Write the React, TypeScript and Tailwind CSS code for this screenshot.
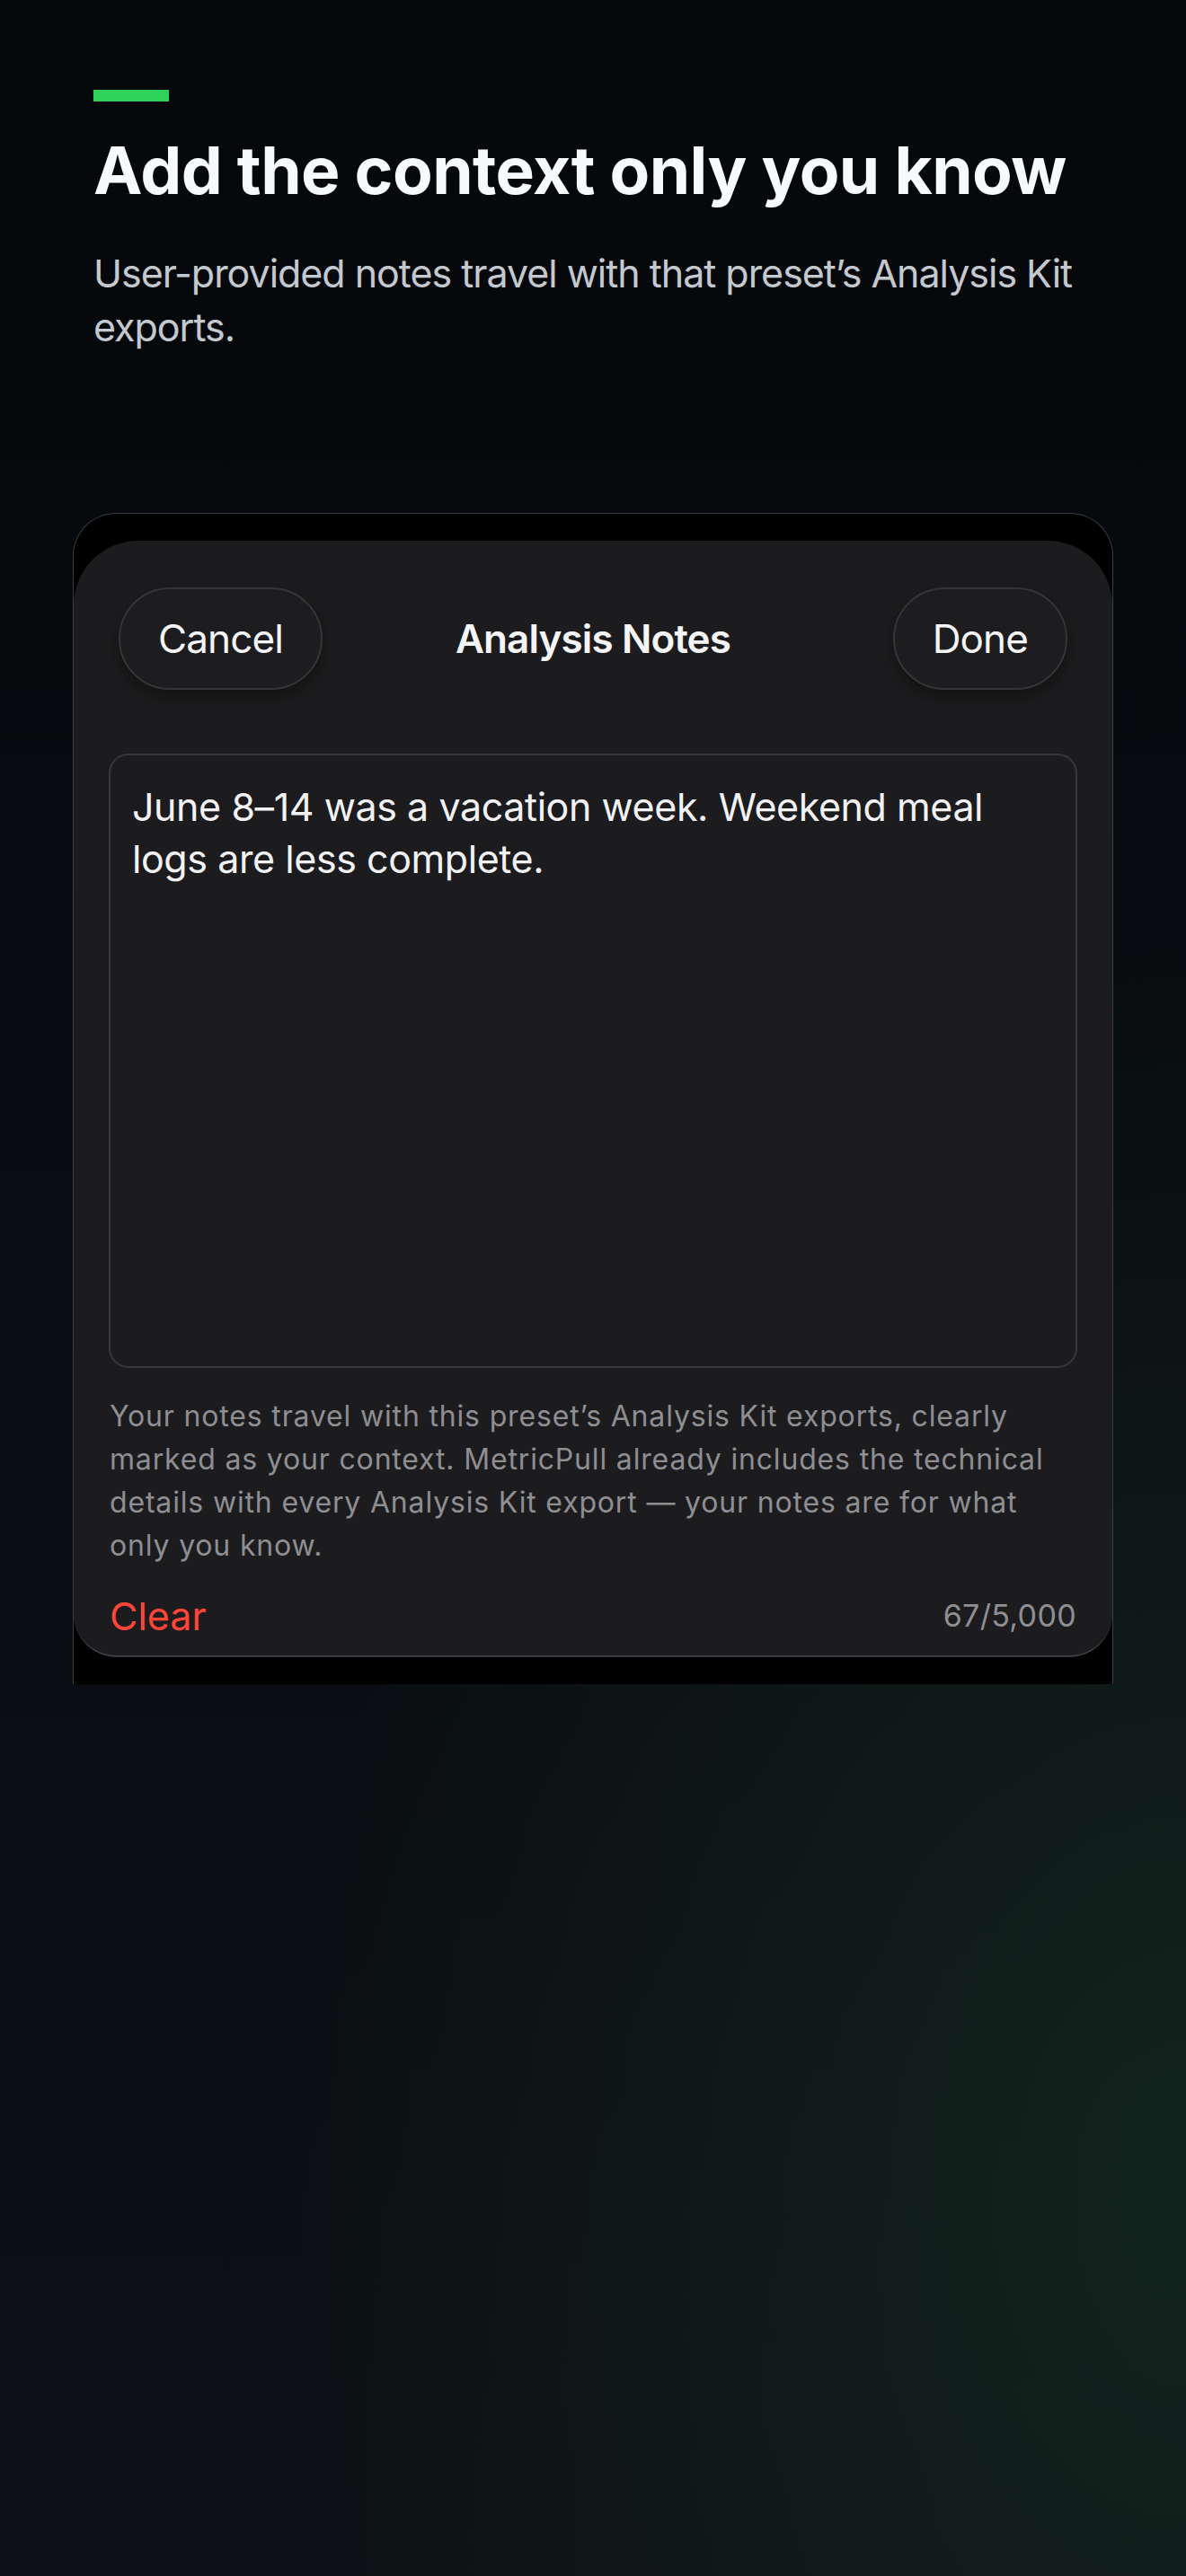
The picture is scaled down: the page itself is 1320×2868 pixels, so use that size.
import React from 'react'

const font = { fontFamily: 'Inter, "Noto Sans", sans-serif' }

function Pill({ label }: { label: string }) {
  return (
    <button className="flex h-[114px] items-center justify-center rounded-full border-2 border-[#353537] bg-[#1d1d1f] px-[42px] text-[44px] leading-none tracking-[-0.02em] text-[#f5f5f7] shadow-[0_8px_18px_rgba(0,0,0,0.35)]">
      {label}
    </button>
  )
}

export default function App() {
  return (
    <div
      style={font}
      className="min-h-[2868px] w-full bg-[radial-gradient(ellipse_75%_50%_at_100%_85%,rgba(24,52,38,0.55),transparent_100%),linear-gradient(180deg,#05070a_0%,#080b0f_35%,#0d1115_100%)] px-[81px] pt-[100px]"
    >
      <div className="px-[23px]">
        <div className="h-[13px] w-[84px] bg-[#30d158]" />
        <h1 className="mt-[37px] text-[73px] font-bold leading-[80px] tracking-[-0.008em] text-[#f8f9fb]">
          Add the context only you know
        </h1>
        <p className="mt-[44px] max-w-[1100px] text-[43px] leading-[60px] tracking-[-0.024em] text-[#c4c8cf]">
          User-provided notes travel with that preset’s Analysis Kit exports.
        </p>
      </div>

      <div className="mt-[177px] overflow-hidden rounded-t-[48px] border border-b-0 border-[#3a3e46] bg-black pb-[30px] pt-[30px]">
        <div className="rounded-b-[48px] rounded-t-[72px] border-b-2 border-[#3c3e44] bg-[#1c1c1e] px-[50px] pb-[18px] pt-[52px] shadow-[0_10px_30px_rgba(0,0,0,0.6)]">
          <div className="grid grid-cols-[1fr_auto_1fr] items-center">
            <div className="flex justify-start">
              <Pill label="Cancel" />
            </div>
            <div className="text-[44px] font-semibold leading-none tracking-[-0.02em] text-[#f5f5f7]">
              Analysis Notes
            </div>
            <div className="flex justify-end">
              <Pill label="Done" />
            </div>
          </div>

          <div className="-mx-[11px] mt-[71px] h-[684px] rounded-[22px] border-2 border-[#38383b] bg-[#1c1c1e] px-[24px] pt-[28px]">
            <p className="text-[43px] leading-[58px] tracking-[-0.01em] text-[#f2f2f4]">
              June 8–14 was a vacation week. Weekend meal logs are less complete.
            </p>
          </div>

          <p className="-mx-[10px] mt-[30px] text-[32px] leading-[48px] tracking-[0.026em] text-[#8e8e93]">
            Your notes travel with this preset’s Analysis Kit exports, clearly marked as your context.
            MetricPull already includes the technical details with every Analysis Kit export — your notes
            are for what only you know.
          </p>

          <div className="-mx-[10px] mt-[28px] flex h-[52px] items-center justify-between">
            <span className="text-[43px] leading-none text-[#ff453a]">Clear</span>
            <span className="text-[34px] leading-none tracking-[0.01em] text-[#8e8e93]">67/5,000</span>
          </div>
        </div>
      </div>
    </div>
  )
}
